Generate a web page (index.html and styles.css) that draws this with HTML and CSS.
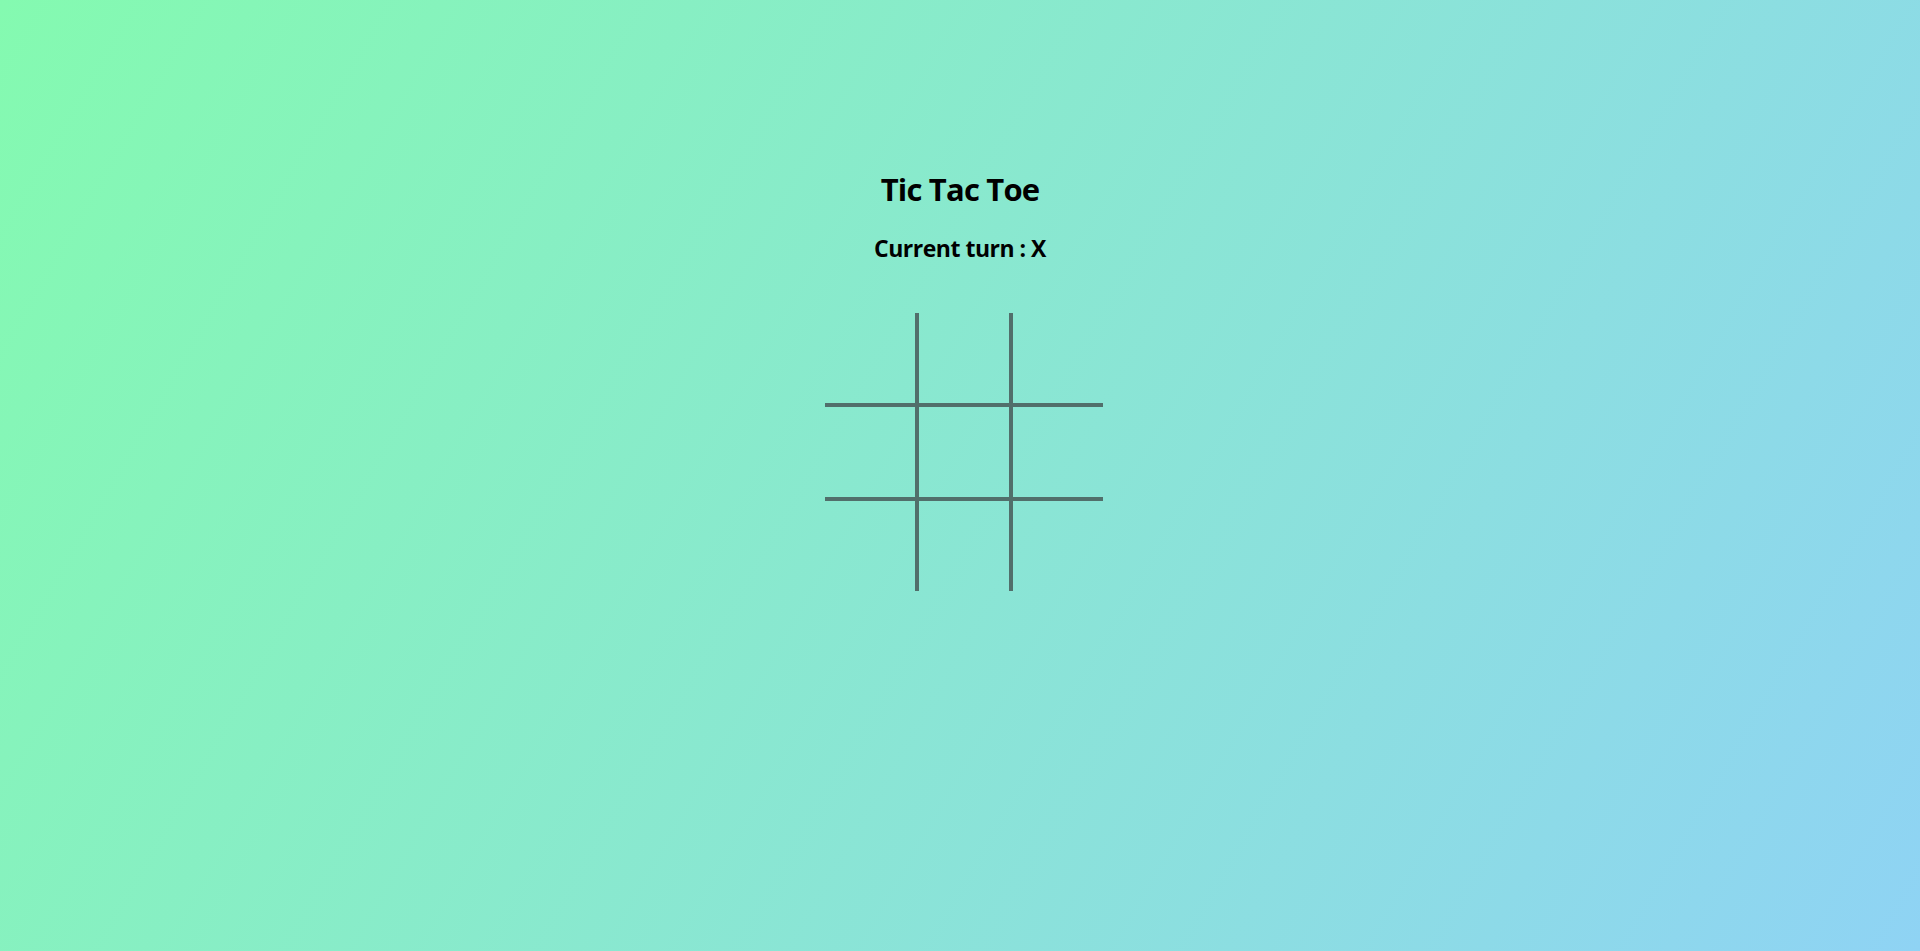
FILE: index.html
```html
<!DOCTYPE html>
<html lang="en">
<head>
<meta charset="utf-8">
<title>Tic Tac Toe</title>
<link rel="stylesheet" href="styles.css">
</head>
<body>
<main class="game">
  <h1 class="title">Tic Tac Toe</h1>
  <h2 class="turn">Current turn : X</h2>
  <div class="board">
    <div class="cell c-r c-b"></div>
    <div class="cell c-r c-b"></div>
    <div class="cell c-b"></div>
    <div class="cell c-r c-b"></div>
    <div class="cell c-r c-b"></div>
    <div class="cell c-b"></div>
    <div class="cell c-r"></div>
    <div class="cell c-r"></div>
    <div class="cell"></div>
  </div>
</main>
</body>
</html>
```

FILE: styles.css
```css
html, body {
  margin: 0;
  padding: 0;
}

body {
  min-height: 100vh;
  background: linear-gradient(120deg, #84fab0 0%, #8fd3f4 100%);
  font-family: "Open Sans", "Noto Sans", sans-serif;
  color: #000;
}

.game {
  display: flex;
  flex-direction: column;
  align-items: center;
  padding-top: 169px;
}

.title {
  margin: 0;
  font-size: 31px;
  line-height: 40px;
  font-weight: 700;
  letter-spacing: -0.8px;
}

.turn {
  margin: 23px 0 0;
  font-size: 23px;
  line-height: 32px;
  font-weight: 700;
  letter-spacing: -0.5px;
}

.board {
  margin-top: 49px;
  margin-left: 8px;
  display: grid;
  grid-template-columns: auto auto auto;
}

.cell {
  width: 90px;
  height: 90px;
}

.c-r {
  border-right: 4px solid #516f6b;
}

.c-b {
  border-bottom: 4px solid #516f6b;
}
```
